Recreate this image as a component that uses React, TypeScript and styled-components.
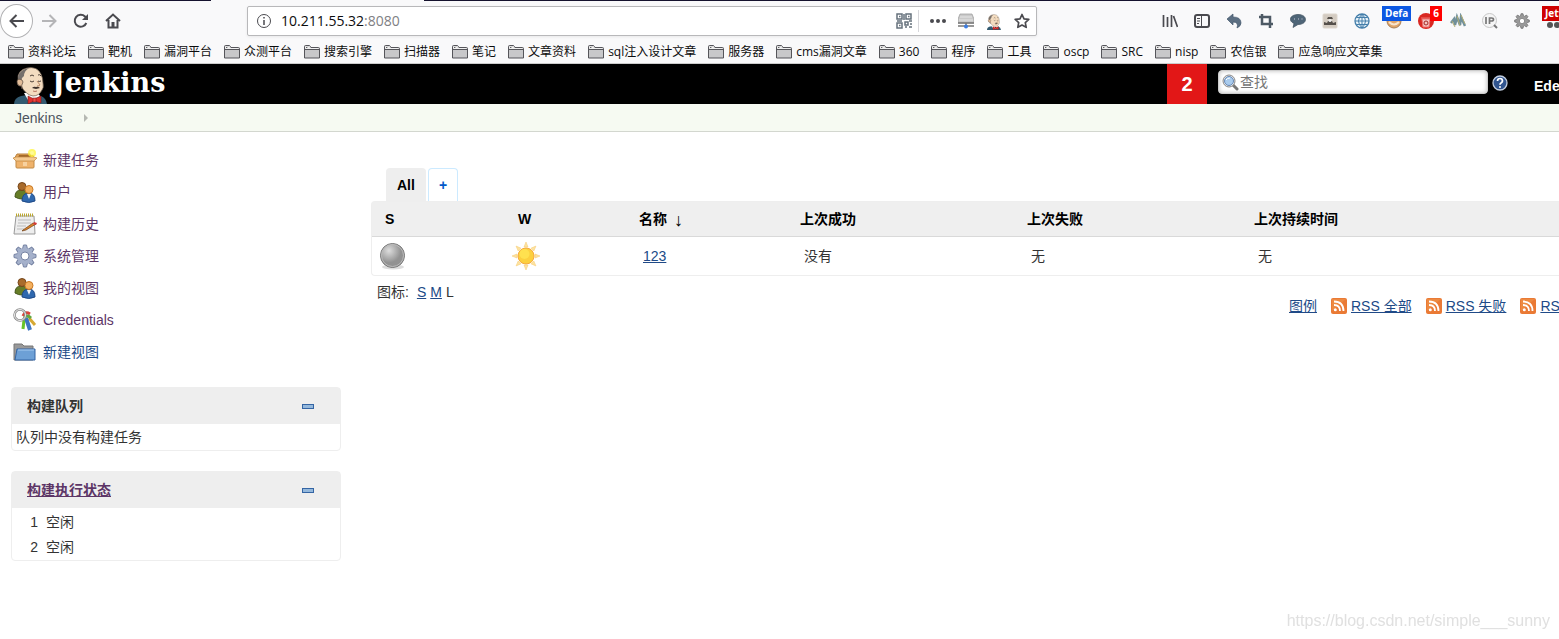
import React from "react";
import styled, { createGlobalStyle } from "styled-components";

const sans = `"Liberation Sans", "Noto Sans CJK SC", sans-serif`;
const chrome = `"Open Sans", "Noto Sans CJK SC", sans-serif`;

const GlobalStyle = createGlobalStyle`
  *, *::before, *::after { box-sizing: border-box; }
  body { margin: 0; background: #fff; color: #333; font: 14px/20px ${sans}; overflow-x: hidden; }
  button { border: 0; padding: 0; background: none; font: inherit; color: inherit; }
  svg { display: block; flex: none; }
`;

/* ---------- browser chrome ---------- */

const Browser = styled.header`
  background: #f9f9fa;
  border-bottom: 1px solid #ccc;
  font-family: ${chrome};
  overflow: hidden;
`;
const TabStrip = styled.div`
  height: 1px;
  background: linear-gradient(90deg, #15122e 211px, #f9f9fa 211px, #f9f9fa 424px, #15122e 424px);
`;
const Toolbar = styled.div`
  display: flex;
  align-items: center;
  height: 40px;
`;
const NavGroup = styled.nav`
  display: flex;
  flex: none;
  align-items: center;
`;
const NavButton = styled.button<{ $round?: boolean }>`
  display: grid;
  place-items: center;
  flex: none;
  width: ${(p) => (p.$round ? 33 : 32)}px;
  height: ${(p) => (p.$round ? 34 : 32)}px;
  border-radius: 50%;
  border: ${(p) => (p.$round ? "1px solid #b1b1b3" : "0")};
  background: ${(p) => (p.$round ? "#fff" : "none")};
`;
const Spacer = styled.div<{ $grow: number }>`
  flex: ${(p) => p.$grow} 1 0;
`;
const UrlBar = styled.div`
  display: flex;
  align-items: center;
  flex: 774 1 0;
  height: 30px;
  padding: 0 6px 0 8px;
  border: 1px solid #b8b8ba;
  border-radius: 2px;
  background: #fff;
  box-shadow: 0 1px 3px #0001;
`;
const Address = styled.a`
  flex: 1;
  margin-left: 9px;
  color: #0c0c0d;
  text-decoration: none;
  white-space: nowrap;
  span { color: #808084; }
`;
const UrlActions = styled.div`
  display: flex;
  align-items: center;
  gap: 12px;
`;
const Divider = styled.span`
  width: 1px;
  height: 22px;
  margin: 0 -1px 0 -6px;
  background: #d7d7db;
`;
const Tools = styled.div`
  display: flex;
  flex: 0 0 397px;
  gap: 16px;
  overflow: hidden;
  height: 40px;
  align-items: center;
`;
const Tool = styled.button`
  position: relative;
  flex: 0 0 16px;
  width: 16px;
  height: 16px;
`;
const Badge = styled.span<{ $color: string; $side: "left" | "right" }>`
  position: absolute;
  bottom: 8px;
  ${(p) => (p.$side === "left" ? "left: -4px;" : "right: -8px;")}
  height: 15px;
  padding: 0 3px;
  background: ${(p) => p.$color};
  color: #fff;
  font-size: 10px;
  font-weight: 700;
  line-height: 14px;
  white-space: nowrap;
`;
const Bookmarks = styled.nav`
  display: flex;
  gap: 12px;
  height: 22px;
  padding-left: 8px;
  align-items: center;
`;
const Bookmark = styled.button`
  display: flex;
  align-items: center;
  gap: 4px;
  color: #0c0c0d;
  font-size: 12px;
  line-height: 20px;
  white-space: nowrap;
`;

/* ---------- Jenkins header ---------- */

const Masthead = styled.header`
  display: flex;
  height: 40px;
  background: #000;
  overflow: hidden;
`;
const Brand = styled.a`
  display: flex;
  gap: 5px;
  padding-left: 14px;
  color: #fff;
  font: bold 27px/38px "DejaVu Serif", serif;
  text-decoration: none;
`;
const MastRight = styled.div`
  display: flex;
  flex: 0 0 392px;
  min-width: 0;
  margin-left: auto;
  white-space: nowrap;
`;
const Alerts = styled.a`
  flex: 0 0 40px;
  margin-right: 11px;
  background: #e21717;
  color: #fff;
  font-size: 20px;
  font-weight: 700;
  line-height: 40px;
  text-align: center;
  text-decoration: none;
`;
const SearchBox = styled.label`
  display: flex;
  align-items: center;
  flex: 0 0 270px;
  height: 24px;
  margin: 6px 4px 0 0;
  padding-left: 3px;
  border: 1px solid #ccc;
  border-radius: 4px;
  background: #fff;
  box-shadow: inset 0 0 4px #bbb;
  input {
    flex: 1;
    min-width: 0;
    padding: 0 1px;
    border: 0;
    outline: 0;
    background: none;
    font: 14px/20px ${sans};
  }
  input::placeholder { color: #757575; opacity: 1; }
`;
const Help = styled.a`
  flex: none;
  margin: 11px 26px 0 0;
`;
const UserLink = styled.a`
  flex: none;
  margin-top: 12px;
  color: #fff;
  font-weight: 700;
  text-decoration: none;
`;
const Crumbs = styled.nav`
  display: flex;
  align-items: center;
  gap: 22px;
  height: 28px;
  padding-left: 15px;
  border-bottom: 1px solid #d3d7cf;
  background: #f6faf2;
  a { color: #4d545d; text-decoration: none; }
`;

/* ---------- body ---------- */

const Body = styled.div`
  display: flex;
  align-items: flex-start;
  overflow: hidden;
`;
const Side = styled.aside`
  flex: 0 0 341px;
  padding: 12px 0 20px 11px;
`;
const TaskList = styled.ul`
  margin: 0 0 19px;
  padding: 0 0 0 2px;
  list-style: none;
`;
const Task = styled.a<{ $fresh?: boolean }>`
  display: flex;
  align-items: center;
  gap: 6px;
  height: 32px;
  color: ${(p) => (p.$fresh ? "#204a87" : "#5c3566")};
  text-decoration: none;
`;
const Pane = styled.section`
  margin-bottom: 20px;
  border: 1px solid #eee;
  border-radius: 4px;
`;
const PaneHead = styled.div`
  display: flex;
  align-items: center;
  justify-content: space-between;
  height: 36px;
  padding: 0 26px 0 15px;
  background: #eee;
  font-weight: 700;
  a { color: #5c3566; }
`;
const PaneText = styled.p`
  margin: 0;
  padding: 3px 4px;
  line-height: 20px;
`;
const Executors = styled.table`
  margin: 1px 0;
  border-spacing: 0;
  td { height: 25px; padding: 0 0 0 8px; }
  td:first-child { width: 26px; padding: 0; text-align: right; }
`;
const Main = styled.main`
  flex: 1;
  min-width: 0;
  padding: 36px 0 0 30px;
`;
const Tabs = styled.div`
  display: flex;
  gap: 2px;
  padding-left: 15px;
`;
const Tab = styled.a<{ $active?: boolean }>`
  height: 33px;
  padding: 0 10px;
  border: 1px solid ${(p) => (p.$active ? "#eee" : "#cceaff")};
  border-bottom: 0;
  border-radius: 4px 4px 0 0;
  background: ${(p) => (p.$active ? "#eee" : "#fff")};
  color: ${(p) => (p.$active ? "#000" : "#0059c9")};
  font-weight: 700;
  line-height: 33px;
  text-decoration: none;
`;
const Jobs = styled.table`
  width: 100%;
  border: 1px solid #eee;
  border-right: 0;
  border-radius: 4px 0 0 4px;
  border-spacing: 0;
  table-layout: fixed;
  th {
    height: 35px;
    padding: 0 0 0 13px;
    border-bottom: 1px solid #d9d9d9;
    background: #efefef;
    color: #000;
    text-align: left;
    white-space: nowrap;
  }
  td { height: 38px; padding: 0 0 0 17px; }
  td a { color: #204a87; }
`;
const IconCell = styled.td`
  && { padding-left: 7px; }
`;
const Sort = styled.span`
  margin-left: 7px;
  font: 18px/20px "Liberation Serif", serif;
  vertical-align: -2px;
`;
const Sizes = styled.div`
  display: flex;
  gap: 4px;
  padding: 6px 0 0 6px;
  span:first-child { margin-right: 4px; }
  a { color: #204a87; }
`;
const Feeds = styled.div`
  display: flex;
  width: 270px;
  margin: -6px 0 0 auto;
  gap: 14px;
  white-space: nowrap;
  a { color: #204a87; }
`;
const Feed = styled.a`
  display: flex;
  align-items: center;
  gap: 4px;
  flex: none;
`;
const Watermark = styled.div`
  position: fixed;
  right: 9px;
  bottom: 7px;
  color: #e0e0e0;
  font: 16px/22px "Liberation Sans", sans-serif;
`;

/* ---------- drawings ---------- */

const Folder = () => (
  <svg width="16" height="14" viewBox="0 0 16 14">
    <path d="M.5 13V1.500q0-1 1-1h4l1.500 2h7.500q1 0 1 1V13z" fill="#c8c8ca" stroke="#55555a" />
    <path d="M1 4.500h14" stroke="#55555a" /><path d="M1.500 3.500h13M6 2l-4.500-.5v2z" stroke="#f0f0f0" />
  </svg>
);

const Butler = ({ width, height }: { width: number; height: number }) => (
  <svg width={width} height={height} viewBox="0 0 33 40">
    <path d="M0 40q0-6 7-8l6-1 14 1q5 2 6 8z" fill="#335a70" />
    <path d="M10 29l4 7 7 1 5-5-3-4z" fill="#fff" />
    <path d="M7 22Q2 22 4 16 3 6 13 4q10-2 14 6 2 4 2 9 1 5-1 7-3 6-9 6-7-1-12-10z" fill="#f3dcc0" stroke="#6a5a4c" strokeWidth=".7" />
    <path d="M7 18Q2 15 5 10q3-5 10-6-5 3-5 8l-2 2z" fill="#77706b" />
    <path d="M8 16q-4-2-5 1 0 5 4 5l1 3q-1-4 1-7z" fill="#e3bd99" stroke="#55453b" strokeWidth=".7" />
    <path d="M16 12q2-2 4 0M24 11q2-1 3 1M16 17q2 2 4 0M24 17q1 1 3 0" fill="none" stroke="#4d4038" />
    <path d="M23 17l3 4q0 1-3 1" fill="none" stroke="#bb8964" />
    <path d="M18 24q2-2 4-1 2-1 4 1l-4 1z" fill="#3c302b" />
    <path d="M19 27q2 1 4 0" fill="none" stroke="#b87863" />
    <path d="M14 32l6 3 7-3v7l-7-2-6 3z" fill="#df302d" stroke="#7b1715" strokeWidth=".6" />
    <rect x="19" y="34" width="3" height="4" fill="#f04a43" stroke="#7b1715" strokeWidth=".5" />
  </svg>
);

const People = () => (
  <svg width="24" height="24" viewBox="0 0 24 24">
    <path d="M2 17q0-7 6-7 7 0 7 7-6 4-13 0z" fill="#667d28" stroke="#43551a" />
    <circle cx="9" cy="6.500" r="4" fill="#a86b2c" stroke="#75461a" />
    <path d="M9 21q0-8 7-8 6 0 6 8-6 3-13 0z" fill="#2f68ae" stroke="#204a87" />
    <path d="M14 14l2 5 2-5z" fill="#f3f3f3" />
    <circle cx="16" cy="9.500" r="4" fill="#f3b05f" stroke="#c97823" />
  </svg>
);
const Package = () => (
  <svg width="24" height="24" viewBox="0 0 24 24">
    <path d="M4 6h15l3 5H1z" fill="#e3a55c" stroke="#b8813d" /><path d="M6 7h12v3H5z" fill="#a5692a" />
    <path d="M3 11h18v8q0 1-1 1H4q-1 0-1-1z" fill="#efb36c" stroke="#c28a45" />
    <path d="M0 10l3-1h18l3 1-3 3H3z" fill="#f5c98f" stroke="#c28a45" strokeWidth=".7" />
    <path d="M10 15h4M10 17h4" stroke="#fff0d4" /><circle cx="19" cy="5" r="4" fill="#fff53a" opacity=".75" /><circle cx="19" cy="5" r="2" fill="#fffb98" />
  </svg>
);
const Notepad = () => (
  <svg width="24" height="24" viewBox="0 0 24 24">
    <path d="M3 4h18l1 18H1z" fill="#eee" stroke="#999" /><path d="M3 3h18" stroke="#bba72e" strokeWidth="3" strokeDasharray="1 1" />
    <path d="M5 8h13M5 11h13M4 14h9M4 17h7" stroke="#bbb" /><path d="M10 18l10-7 3 1-10 6-4 1z" fill="#d9822a" stroke="#704018" strokeWidth=".7" /><path d="M21 10l3 1-1 2-3-1z" fill="#d43b3b" />
  </svg>
);
const Gear = ({ size, fill, stroke }: { size: number; fill: string; stroke: string }) => (
  <svg width={size} height={size} viewBox="0 0 24 24">
    <g fill={fill} stroke={stroke}>
      {[0, 45, 90, 135].map((a) => <path key={a} d="M9.500 5l1-4h3l1 4v14l-1 4h-3l-1-4z" transform={`rotate(${a} 12 12)`} />)}
    </g>
    <circle cx="12" cy="12" r="8" fill={fill} /><circle cx="12" cy="12" r="4" fill="#fff" stroke={stroke} />
  </svg>
);
const Keys = () => (
  <svg width="24" height="24" viewBox="0 0 24 24" fill="none">
    <path d="M16 10l6 7" stroke="#d6a933" strokeWidth="3" /><path d="M11 12l-1 9" stroke="#68c427" strokeWidth="3" />
    <path d="M13 10l4 12" stroke="#3d76c0" strokeWidth="4" /><path d="M10 8q2-5 7-2" stroke="#d8453b" strokeWidth="3" />
    <path d="M11 10q3-4 7 0" stroke="#60a843" strokeWidth="3" /><circle cx="7" cy="7" r="5.500" stroke="#888" strokeWidth="2.500" /><circle cx="7" cy="7" r="5.500" stroke="#eee" />
  </svg>
);
const BlueFolder = () => (
  <svg width="24" height="24" viewBox="0 0 24 24">
    <path d="M1 20V4h8l2 2h9v14z" fill="#999" stroke="#777" />
    <path d="M4 9h18v11H2z" fill="#6da0d6" stroke="#3465a4" /><path d="M5 10h16" stroke="#a8cbef" />
  </svg>
);
const Minus = () => (
  <svg width="12" height="5" viewBox="0 0 12 5"><rect x=".5" y=".5" width="11" height="4" fill="#94b8dc" stroke="#3465a4" /></svg>
);
const Rss = () => (
  <svg width="16" height="16" viewBox="0 0 16 16" fill="none">
    <rect width="16" height="16" rx="2" fill="#ea7a35" /><path d="M1 1h14L1 13z" fill="#f09a50" opacity=".5" />
    <path d="M3 7q6 0 6 6M3 3.500q9.500 0 9.500 9.500" stroke="#fff" strokeWidth="1.800" /><circle cx="4.300" cy="11.700" r="1.500" fill="#fff" />
  </svg>
);
const Ball = () => (
  <svg width="28" height="28" viewBox="0 0 28 28">
    <defs><radialGradient id="ball" cx=".35" cy=".3"><stop stopColor="#ddd" /><stop offset="1" stopColor="#929292" /></radialGradient></defs>
    <ellipse cx="14" cy="25" rx="11" ry="2.500" fill="#ddd" /><circle cx="13.500" cy="13.500" r="12" fill="url(#ball)" stroke="#777" /><circle cx="13.500" cy="13.500" r="11" fill="none" stroke="#bbb" />
  </svg>
);
const Sun = () => (
  <svg width="28" height="30" viewBox="1 0 28 30">
    {[0, 45, 90, 135, 180, 225, 270, 315].map((a) => <path key={a} d="M13 6L15 1l2 5z" fill="#fde3a0" stroke="#f7cf7c" strokeWidth=".6" transform={`rotate(${a} 15 15)`} />)}
    <circle cx="15" cy="15" r="8" fill="#fcd03e" stroke="#f5a93b" /><circle cx="13.500" cy="13" r="5" fill="#ffe14f" />
  </svg>
);
const Magnifier = () => (
  <svg width="17" height="17" viewBox="0 0 17 17">
    <path d="M11 11l4 4" stroke="#777" strokeWidth="3" strokeLinecap="round" />
    <circle cx="7" cy="7" r="6" fill="#eee" stroke="#888" /><circle cx="7" cy="7" r="4.500" fill="#a9cbed" stroke="#6688b5" /><path d="M4 6q1-2 4-2" stroke="#fff" fill="none" />
  </svg>
);
const HelpIcon = () => (
  <svg width="16" height="16" viewBox="0 0 16 16" fill="none">
    <circle cx="8" cy="8" r="7" fill="#31558f" stroke="#c2cee0" strokeWidth="1.300" />
    <path d="M5.500 6q0-2.500 2.500-2.500T10.500 6q0 1-1.500 2-1 .6-1 1.700" stroke="#fff" strokeWidth="1.700" /><circle cx="8" cy="12" r="1" fill="#fff" />
  </svg>
);

const Glyph = ({ children, size = 16 }: { children: React.ReactNode; size?: number }) => (
  <svg width={size} height={size} viewBox="0 0 16 16" fill="none" stroke="#4a4a4f" strokeWidth="2">{children}</svg>
);

const tools: { name: string; art: React.ReactNode; badge?: React.ReactNode }[] = [
  { name: "Library", art: <Glyph><path d="M1.500 2v12M5.500 4v10M9.500 2v12M11.500 3l4 11" strokeWidth="1.700" /></Glyph> },
  { name: "Sidebar", art: <Glyph><rect x="1" y="2" width="14" height="12" rx="2" /><path d="M7.500 2v12" strokeWidth="1" /><path d="M3 5.500h3M3 8h3M3 10.500h2" strokeWidth="1" /></Glyph> },
  { name: "Undo", art: <Glyph><path d="M1 6l6-5v3q8 0 8 6 0 3-4 5 2-6-4-6v3z" fill="#5c6f82" stroke="#44586b" strokeWidth=".7" /></Glyph> },
  { name: "Crop", art: <Glyph><path d="M4 1v10h11M1 4h11v11" stroke="#4d5964" strokeWidth="2.500" /></Glyph> },
  { name: "Comments", art: <Glyph><path d="M8 1.500c10 0 10 10 0 10l-5 3 1-4C-3 7 1 1.500 8 1.500z" fill="#4f6577" stroke="#41505f" strokeWidth=".7" /><path d="M4 6h1M8 6h1M11.500 6h1" stroke="#ccd" strokeWidth="1" /></Glyph> },
  { name: "Agent", art: <Glyph><rect x="1" y="1" width="14" height="14" rx="1" fill="#d3cbc1" stroke="#ddd6cd" strokeWidth="1" /><path d="M2 12V9l3 1 1-2h4l1 2 3-1v3zM6 4h4l1 2H5z" fill="#55504b" stroke="none" /><circle cx="8" cy="7.500" r="1.500" fill="#eee" stroke="none" /></Glyph> },
  { name: "Globe", art: <Glyph><circle cx="8" cy="8" r="7" fill="#e8f3f9" stroke="#447eaa" strokeWidth="1.300" /><path d="M1 8h14M8 1v14M2.500 4.500h11M2.500 11.500h11M8 1Q1 8 8 15M8 1q7 7 0 14" stroke="#447eaa" strokeWidth="1" /></Glyph> },
  { name: "User agent", art: <Glyph><circle cx="8" cy="8" r="7" fill="#e0a468" stroke="#a88058" strokeWidth="1" /><path d="M3 9q5 5 10 0" stroke="#f8e4cc" strokeWidth="2" /></Glyph>, badge: <Badge $color="#0b57e3" $side="left">Defa</Badge> },
  { name: "Cleaner", art: <Glyph><circle cx="8" cy="8" r="8" fill="#d92822" stroke="none" /><path d="M4 6h8l-1 8H5zM3 5h10" fill="#f3c5c2" stroke="#ed736f" strokeWidth="1" /><circle cx="8" cy="10" r="2" stroke="#a42723" strokeWidth="1" /></Glyph>, badge: <Badge $color="#f00" $side="right">6</Badge> },
  { name: "Wappalyzer", art: <Glyph><path d="M1 10l3-4 1 6 2-8 3 8 1-8 4 9" stroke="#71909a" strokeWidth="2.500" /><path d="M2 8l3 6M7 3l3 10M11 2l4 9" stroke="#b3ad73" strokeWidth="1" /></Glyph> },
  { name: "IP lookup", art: <Glyph><circle cx="7.500" cy="7.500" r="7" fill="#f5f5f5" stroke="#c6c6c6" strokeWidth="1" /><path d="M4 4v7M7.500 11V5h2q2 0 2 1.500T9.500 8h-2" stroke="#777" strokeWidth="1.700" /><path d="M12 12l3 3" stroke="#777" /></Glyph> },
  { name: "Settings", art: <Gear size={16} fill="#999" stroke="#666" /> },
  { name: "Proxy", art: <Glyph><circle cx="4" cy="12" r="3" fill="#555" stroke="none" /><circle cx="11" cy="12" r="3" fill="#555" stroke="none" /></Glyph>, badge: <Badge $color="#cf0000" $side="left">Jetty</Badge> },
];

const bookmarks = ["资料论坛", "靶机", "漏洞平台", "众测平台", "搜索引擎", "扫描器", "笔记", "文章资料", "sql注入设计文章", "服务器", "cms漏洞文章", "360", "程序", "工具", "oscp", "SRC", "nisp", "农信银", "应急响应文章集"];

const tasks: { label: string; icon: React.ReactNode; fresh?: boolean }[] = [
  { label: "新建任务", icon: <Package /> },
  { label: "用户", icon: <People /> },
  { label: "构建历史", icon: <Notepad /> },
  { label: "系统管理", icon: <Gear size={24} fill="#a5b1cb" stroke="#7683a3" /> },
  { label: "我的视图", icon: <People /> },
  { label: "Credentials", icon: <Keys /> },
  { label: "新建视图", icon: <BlueFolder />, fresh: true },
];

export default function App() {
  return (
    <>
      <GlobalStyle />
      <Browser>
        <TabStrip />
        <Toolbar>
          <NavGroup>
            <NavButton $round aria-label="Back"><Glyph><path d="M15 8H2M7.500 2L1.500 8l6 6" /></Glyph></NavButton>
            <NavButton aria-label="Forward"><svg width="16" height="16" viewBox="0 0 16 16" fill="none" stroke="#b5b5b7" strokeWidth="2"><path d="M1 8h13M8.500 2l6 6-6 6" /></svg></NavButton>
            <NavButton aria-label="Reload"><Glyph><path d="M13.300 10A6 6 0 1 1 12 3.500L14 6" /><path d="M15 1v6H9z" fill="#4a4a4f" stroke="none" /></Glyph></NavButton>
            <NavButton aria-label="Home"><Glyph><path d="M1 8l7-6.500L15 8M3.500 7v7.500h9V7" /><path d="M8 9v5" strokeWidth="3" /></Glyph></NavButton>
          </NavGroup>
          <Spacer $grow={118} />
          <UrlBar>
            <Glyph><circle cx="8" cy="8" r="6.500" strokeWidth="1" /><path d="M8 7v5M8 4v1.500" strokeWidth="1.500" /></Glyph>
            <Address href="#">10.211.55.32<span>:8080</span></Address>
            <UrlActions>
              <button aria-label="QR code">
                <svg width="16" height="16" viewBox="0 0 16 16" fill="none" stroke="#65717c" strokeWidth="1.500">
                  <path d="M1 1h5v5H1zM10 1h5v5h-5zM1 10h5v5H1z" /><path d="M3 3.500h1.500M12 3.500h1.500M3 12.500h1.500M8 1v6M1 8h5M9 9h3v3H9zM13 8h3M13 14h3M9 14h2M14 11h2" />
                </svg>
              </button>
              <Divider />
              <button aria-label="Page actions"><Glyph><circle cx="2" cy="8" r="2" fill="#4a4a4f" stroke="none" /><circle cx="8" cy="8" r="2" fill="#4a4a4f" stroke="none" /><circle cx="14" cy="8" r="2" fill="#4a4a4f" stroke="none" /></Glyph></button>
              <button aria-label="Server">
                <svg width="16" height="16" viewBox="0 0 16 16"><path d="M2 1h12l2 5v4H0V6z" fill="#c9c9c9" stroke="#999" strokeWidth=".7" /><path d="M2 4h12M1 7h14" stroke="#e5e5e5" /><path d="M0 10h16M0 13h16M8 10v4" stroke="#777" strokeWidth="1.500" /><circle cx="8" cy="13.500" r="2" fill="#3d7de0" /></svg>
              </button>
              <button aria-label="Jenkins"><Butler width={16} height={17} /></button>
              <button aria-label="Bookmark"><Glyph><path d="M8 1.500l2 4.300 4.800.6-3.500 3.200.9 4.700L8 12l-4.200 2.300.9-4.700L1.200 6.400 6 5.800z" strokeWidth="1.700" strokeLinejoin="round" /></Glyph></button>
            </UrlActions>
          </UrlBar>
          <Spacer $grow={125} />
          <Tools>
            {tools.map((t) => <Tool key={t.name} aria-label={t.name}>{t.art}{t.badge}</Tool>)}
          </Tools>
        </Toolbar>
        <Bookmarks>
          {bookmarks.map((b) => <Bookmark key={b}><Folder />{b}</Bookmark>)}
        </Bookmarks>
      </Browser>

      <Masthead>
        <Brand href="#"><Butler width={33} height={40} />Jenkins</Brand>
        <MastRight>
          <Alerts href="#">2</Alerts>
          <SearchBox><Magnifier /><input type="text" placeholder="查找" aria-label="查找" /></SearchBox>
          <Help href="#" aria-label="Help"><HelpIcon /></Help>
          <UserLink href="#">Eden</UserLink>
        </MastRight>
      </Masthead>
      <Crumbs>
        <a href="#">Jenkins</a>
        <svg width="4" height="8" viewBox="0 0 4 8"><path d="M0 0l4 4-4 4z" fill="#b5b8b2" /></svg>
      </Crumbs>

      <Body>
        <Side>
          <TaskList>
            {tasks.map((t) => <li key={t.label}><Task href="#" $fresh={t.fresh}>{t.icon}{t.label}</Task></li>)}
          </TaskList>
          <Pane>
            <PaneHead>构建队列<button aria-label="收起构建队列"><Minus /></button></PaneHead>
            <PaneText>队列中没有构建任务</PaneText>
          </Pane>
          <Pane>
            <PaneHead><a href="#">构建执行状态</a><button aria-label="收起构建执行状态"><Minus /></button></PaneHead>
            <Executors>
              <tbody>
                <tr><td>1</td><td>空闲</td></tr>
                <tr><td>2</td><td>空闲</td></tr>
              </tbody>
            </Executors>
          </Pane>
        </Side>
        <Main>
          <Tabs>
            <Tab href="#" $active>All</Tab>
            <Tab href="#">+</Tab>
          </Tabs>
          <Jobs>
            <colgroup>
              <col style={{ width: "133px" }} /><col style={{ width: "121px" }} /><col style={{ width: "161px" }} />
              <col style={{ width: "227px" }} /><col style={{ width: "227px" }} /><col />
            </colgroup>
            <thead>
              <tr><th>S</th><th>W</th><th>名称<Sort>↓</Sort></th><th>上次成功</th><th>上次失败</th><th>上次持续时间</th></tr>
            </thead>
            <tbody>
              <tr><IconCell><Ball /></IconCell><IconCell><Sun /></IconCell><td><a href="#">123</a></td><td>没有</td><td>无</td><td>无</td></tr>
            </tbody>
          </Jobs>
          <Sizes><span>图标:</span><a href="#">S</a><a href="#">M</a><span>L</span></Sizes>
          <Feeds>
            <a href="#">图例</a>
            <Feed href="#"><Rss />RSS 全部</Feed>
            <Feed href="#"><Rss />RSS 失败</Feed>
            <Feed href="#"><Rss />RSS 最新</Feed>
          </Feeds>
        </Main>
      </Body>
      <Watermark>https://blog.csdn.net/simple___sunny</Watermark>
    </>
  );
}
